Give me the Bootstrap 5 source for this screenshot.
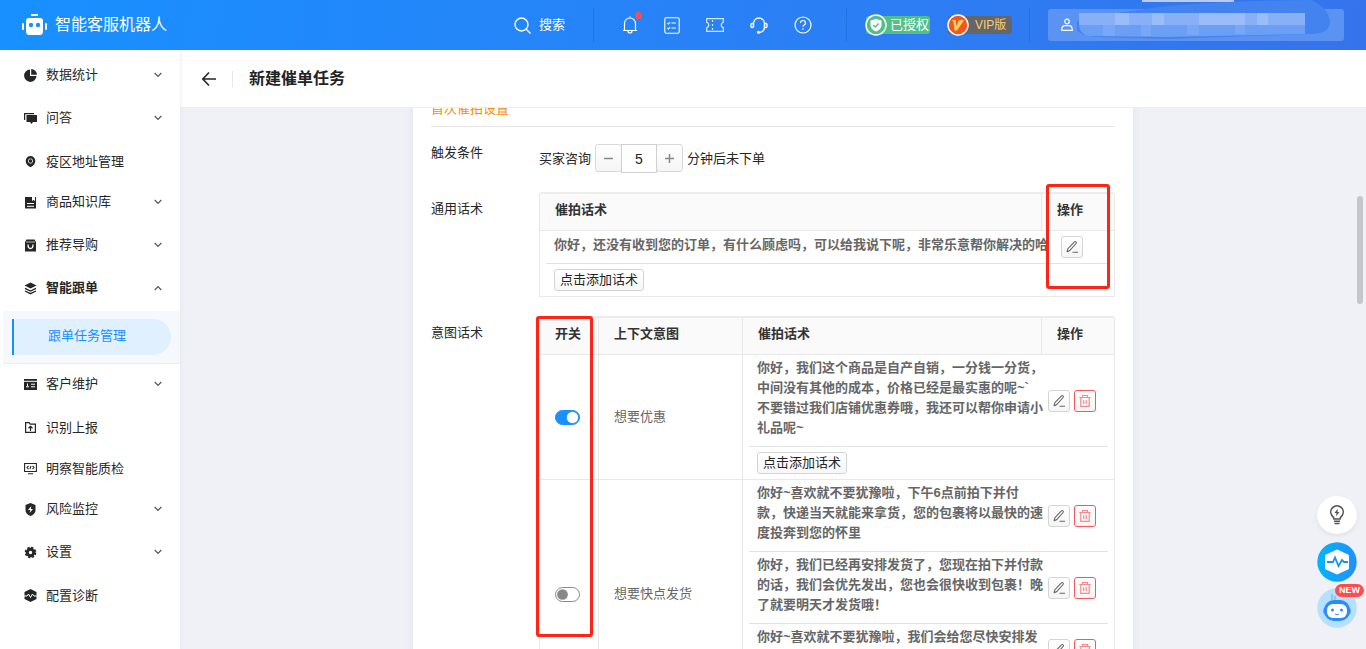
<!DOCTYPE html>
<html lang="zh-CN">
<head>
<meta charset="utf-8">
<meta name="viewport" content="width=device-width, initial-scale=1">
<title>新建催单任务</title>
<link href="https://cdn.jsdelivr.net/npm/bootstrap@5.3.0/dist/css/bootstrap.min.css" rel="stylesheet">
<style>
:root{--blue:#1890ff;--line:#e8e8e8;--ink:#262626}
body{font-family:"Liberation Sans","Noto Sans CJK SC",sans-serif;font-size:13px;line-height:20px;color:var(--ink);background:#eff1f6}
a{text-decoration:none;color:inherit}
svg{display:block;flex:none}
.topbar{height:50px;background:linear-gradient(100deg,#1890ff 0%,#2b7ff5 60%,#3573ec 100%);color:#fff;padding:0 22px}
.brand-name{font-size:16px;margin-left:8px}
.tool-btn{background:none;border:0;color:#fff;padding:0}
.top-rule{width:1px;height:34px;background:#1f72e4}
.tools{width:190px;margin:0 34px 0 28px}
.dot{width:7px;height:7px;background:#ff4d4f;border-radius:50%;top:-4px;right:-4px}
.tags{gap:18px;margin:0 17px 0 19px}
.tag{height:18px;border-radius:3px;font-size:13px;line-height:18px;padding:0 6px 0 24px}
.tag svg{left:-1px;top:-2px}
.tag-ok{background:#52bf88;width:64px}
.tag-vip{background:#666;color:#f5cf74;width:64px;font-size:12px;padding-left:27px}
.user-box{width:296px;height:32px;border-radius:3px;background:#5b93f3;border:0;color:#fff;padding:0 0 0 13px;margin-left:18px}
.sidebar{width:180px;flex:none;background:#fff;padding-top:5px;box-shadow:0 0 4px #e0e4ea;z-index:1}
.side-link{height:40px;margin-bottom:3px;padding:0 18px 0 24px;gap:9px;width:100%;background:none;border:0;color:var(--ink);text-align:left}
.side-link.plain{height:41px;margin-bottom:0}
.side-sub{height:53px;margin-left:3px;background:#f5f9fd;border-bottom:1px solid #e1f0ff;padding:8px 9px 0}
.side-sub a{display:block;height:36px;line-height:34px;background:#e1f0ff;border-left:2px solid var(--blue);border-radius:0 18px 18px 0;color:var(--blue);padding-left:34px}
.page-head{height:58px;background:#fff;padding-left:21px;flex:none;border-bottom:1px solid #eceef2}
.page-head h1{font-size:16px;font-weight:600;margin:0;color:#222}
.head-rule{width:1px;height:16px;background:#e8e8e8;margin:0 16px 0 15px}
.sheet{width:720px;background:#fff;padding:0 18px;box-shadow:0 0 8px #d9e2ef}
.sec-title{color:#ff8c00;font-size:13px;line-height:20px;margin:-9px 0 0;padding-bottom:7px;border-bottom:1px solid var(--line);font-weight:400}
.field-name{width:108px;flex:none;line-height:18px}
.field-main{width:576px}
.row-a{padding-top:17px}
.row-b{padding-top:19px}
.step-btn{width:27px;height:28px;border:1px solid #d9d9d9;background:linear-gradient(#fff,#f5f5f5);color:#888;padding:0;border-radius:3px}
.step-in{width:36px;height:29px;border:1px solid #d0d0d0;text-align:center;margin:0 -1px;padding:0;color:#222;font-size:14px;position:relative}
.talk-table{width:100%;table-layout:fixed;border-collapse:separate;border-spacing:0;border:1px solid var(--line);border-top:2px solid #ececec;border-radius:3px 3px 0 0;margin:0}
.talk-table th{height:37px;background:#fafafa;border-bottom:1px solid var(--line);padding:0 15px 4px 15px;font-weight:600;color:#333}
.talk-table th+th,.talk-table .cell+td{border-left:1px solid var(--line)}
.talk-table td{padding:0;color:#666}
.talk-table tr+tr td{border-top:1px solid var(--line)}
.talk-table .cell{padding:0 14px 0 15px;vertical-align:middle}
.talk-table .talks{padding:0 6px;vertical-align:top}
.talk{padding:0 12px 0 8px;border-bottom:1px solid #e2e2e2;font-weight:600}
.talk p{margin:0;padding:3px 0 8px;width:286px}
.talk.wide{padding-right:25px;height:33px}
.talk.wide p{width:auto;white-space:nowrap}
.add-line{padding:5px 8px}
.add-btn{height:22px;line-height:18px;border:1px solid #d4d4d4;border-radius:3px;background:linear-gradient(#fff,#f7f7f7);padding:0 5px;display:block;color:#222;width:90px;white-space:nowrap}
.ico-btn{width:22px;height:22px;border:1px solid #d4d4d4;border-radius:3px;background:linear-gradient(#fff,#f5f5f5);color:#666;padding:0;display:grid;place-items:center}
.ico-btn.del{border-color:#f5575a;color:#f78a8c}
.form-check-input.sw{width:25px;height:15px;margin:0;display:block;border-color:#888;box-shadow:none;
 background-image:url("data:image/svg+xml,%3csvg xmlns='http://www.w3.org/2000/svg' viewBox='-4 -4 8 8'%3e%3ccircle r='3.3' fill='%23888'/%3e%3c/svg%3e");border-radius:8px;background-position:left center}
.form-check-input.sw:checked{background-color:var(--blue);border-color:var(--blue);background-position:right center;
 background-image:url("data:image/svg+xml,%3csvg xmlns='http://www.w3.org/2000/svg' viewBox='-4 -4 8 8'%3e%3ccircle r='3.5' fill='%23fff'/%3e%3c/svg%3e")}
.callout{border:3px solid #ff2416;border-radius:3px;pointer-events:none}
.callout-op{width:64px;height:105px;top:-8px;right:5px}
.callout-sw{width:57px;height:321px;top:0;left:-3px}
.thumb{width:6px;height:108px;right:3px;top:146px;border-radius:3px;background:#c4c6ca}
.floaters{right:9px;bottom:23px;gap:8px}
.float-btn{width:40px;height:38px;border:0;padding:0;background:none}
.new-tag{top:-4px;right:-7px;background:#ff4d4f;color:#fff;font-size:9px;font-weight:700;line-height:13px;border-radius:7px;padding:0 4px}
</style>
</head>
<body>
<svg class="d-none" aria-hidden="true">
 <symbol id="down" viewBox="0 0 8 6"><path d="M.7 1l3.300 3.400L7.300 1" fill="none" stroke="#555" stroke-width="1.200"/></symbol>
 <symbol id="up" viewBox="0 0 8 6"><path d="M.7 5L4 1.600 7.300 5" fill="none" stroke="#555" stroke-width="1.200"/></symbol>
 <symbol id="pen" viewBox="0 0 14 14"><path d="M2 12l.9-3.300L9.400 1.900q.8-.7 1.600 0 .8.800.1 1.600L4.700 10.600 2 12M7.500 12.300h5.500" fill="none" stroke="currentColor" stroke-width="1.100"/></symbol>
 <symbol id="bin" viewBox="0 0 14 14"><path d="M1.300 3.500h11.400M4.500 3.300V1.500h5v1.800M2.800 3.700v8.600h8.400V3.700M5.700 6.300v3.800M8.300 6.300v3.800" fill="none" stroke="currentColor" stroke-width="1.200"/></symbol>
</svg>
<div class="vh-100 d-flex flex-column overflow-hidden">
<header class="topbar d-flex align-items-center flex-shrink-0">
 <a href="#" class="d-flex align-items-center">
  <svg width="25" height="22" viewBox="0 0 25 22" fill="#fff"><rect x="9" y="0" width="7" height="2" rx=".7"/><path d="M7 4h11q3 0 3 3v10q0 4-3 4H7q-3 0-3-4V7q0-3 3-3z"/><rect x="0" y="9" width="2" height="7" rx="1"/><rect x="23" y="9" width="2" height="7" rx="1"/><circle cx="9" cy="11" r="2.200" fill="#1890ff"/><circle cx="16" cy="11" r="2.200" fill="#1890ff"/></svg>
  <span class="brand-name">智能客服机器人</span>
 </a>
 <button class="tool-btn d-flex align-items-center gap-2 ms-auto me-4" type="button">
  <svg width="17" height="17" viewBox="0 0 17 17" fill="none" stroke="#fff" stroke-width="1.400"><circle cx="7.500" cy="7.500" r="6.500"/><path d="M12 12l4.500 4.500"/></svg>搜索</button>
 <span class="top-rule ms-1"></span>
 <div class="tools d-flex align-items-center justify-content-between">
  <button class="tool-btn position-relative" type="button" aria-label="通知"><svg width="16" height="18" viewBox="0 0 16 18" fill="none" stroke="#fff" stroke-width="1.200"><path d="M1 14.500h14M2.500 14.500V7.500a5.500 5.500 0 0 1 11 0v7M8 2V.5M6 15q0 2 2 2t2-2"/></svg><span class="dot position-absolute"></span></button>
  <button class="tool-btn" type="button" aria-label="任务"><svg width="16" height="17" viewBox="0 0 16 17" fill="none" stroke="#fff" stroke-width="1.100"><rect x=".8" y=".8" width="14.400" height="15.400" rx="1.500"/><path d="M7.500 6h4.500M7.500 11h4.500M3.500 6l1 1 1.700-2M3.500 11l1 1 1.700-2"/></svg></button>
  <button class="tool-btn" type="button" aria-label="卡券"><svg width="18" height="14" viewBox="0 0 18 14" fill="none" stroke="#fff" stroke-opacity=".8" stroke-width="1.200"><path d="M.7.7h16.600v3.800q-2 .2-2 2.500t2 2.500v3.800H.7V9.500q2-.2 2-2.500t-2-2.500zM6.500 2v2m0 2v2m0 2v2"/></svg></button>
  <button class="tool-btn" type="button" aria-label="客服"><svg width="18" height="17" viewBox="0 0 18 17" fill="none" stroke="#fff" stroke-width="1.300"><path d="M3.500 10V6.500a5.500 5.500 0 0 1 11 0V10q0 4.500-5 5.500"/><rect x="1" y="6.500" width="2.500" height="4" rx="1"/><rect x="14.500" y="6.500" width="2.500" height="4" rx="1"/><circle cx="8.500" cy="15.300" r=".9" fill="#fff"/></svg></button>
  <button class="tool-btn" type="button" aria-label="帮助"><svg width="18" height="18" viewBox="0 0 18 18" fill="none" stroke="#fff" stroke-width="1.200"><circle cx="9" cy="9" r="8"/><path d="M6.500 7q0-2.500 2.500-2.500T11.500 7q0 1.300-1.300 2T9 10.800M9 12.300v1.400"/></svg></button>
 </div>
 <span class="top-rule"></span>
 <div class="tags d-flex">
  <span class="tag tag-ok position-relative text-nowrap"><svg class="position-absolute" width="22" height="22" viewBox="0 0 22 22"><circle cx="11" cy="11" r="10" fill="#52bf88" stroke="#fff" stroke-width="1.500"/><path d="M11 5l5.500 1.500v5Q16 15.500 11 17.500 6 15.500 5.500 11.500v-5z" fill="#fff"/><path d="M8.300 11l2 2 3.400-3.500" fill="none" stroke="#52bf88" stroke-width="1.500"/></svg>已授权</span>
  <span class="tag tag-vip position-relative text-nowrap"><svg class="position-absolute" width="22" height="22" viewBox="0 0 22 22"><circle cx="11" cy="11" r="10" fill="#fa541c" stroke="#fff" stroke-width="1.500"/><path d="M5 6h3.500l.8 6L12 6h5l-7 10.500H7.500L6.500 8z" fill="#ffd666"/></svg>VIP版</span>
 </div>
 <span class="top-rule"></span>
 <button class="user-box d-flex align-items-center" type="button" aria-label="账户">
  <svg width="12" height="14" viewBox="0 0 12 14" fill="none" stroke="#fff" stroke-width="1.200"><circle cx="6" cy="3.500" r="2.300"/><path d="M.7 12.300Q.7 7.700 4 7.700h4q3.300 0 3.300 4.600z"/></svg>
  <svg width="260" height="50" viewBox="0 0 260 50" class="ms-1"><path d="M65 0h92v2H65z" fill="#b9cbef"/><path d="M0 22Q5 12 40 13L90 6Q160 0 235 0q18 10 18 22 0 12-20 12L90 39 20 37Q2 35 0 30z" fill="#4283f0"/><path d="M2 24h226v10L90 37 12 36Q2 34 2 24" fill="#6a9ff5"/><path d="M2 13h226v12H2z" fill="#87b0f7"/><path d="M38 13h14v12H38zM75 13h12v12H75zM122 13h46v12h-46zM180 13h11v12h-11z" fill="#9abcf8"/><path d="M26 25h12v11H26zM64 25h10v11H64zM110 25h12v10h-12zM158 25h10v9h-10z" fill="#77a7f6"/></svg>
 </button>
</header>
<div class="d-flex flex-grow-1 overflow-hidden">
 <nav class="sidebar" aria-label="主菜单">
  <button class="side-link d-flex align-items-center" type="button"><svg width="13" height="13" viewBox="0 0 13 13" fill="#262626"><path d="M6 .5V7h6.500A6.200 6.200 0 1 1 6 .5z"/><path d="M7.200 0A6 6 0 0 1 13 5.800H7.200z"/></svg>数据统计<svg class="ms-auto" width="8" height="6"><use href="#down"/></svg></button>
  <button class="side-link d-flex align-items-center" type="button"><svg width="13" height="13" viewBox="0 0 13 13" fill="#262626"><path d="M0 1h10v1.200H1.200V8H0zM2.500 3H13v7H9l-1.500 2L6 10H2.500z"/></svg>问答<svg class="ms-auto" width="8" height="6"><use href="#down"/></svg></button>
  <a href="#" class="side-link plain d-flex align-items-center"><svg width="13" height="13" viewBox="0 0 13 13"><path d="M6.500 1a4.800 4.800 0 0 1 4.800 4.800Q11.300 9.800 6.500 12.300 1.700 9.800 1.700 5.800A4.800 4.800 0 0 1 6.500 1z" fill="#262626"/><circle cx="6.500" cy="6" r="2.200" fill="none" stroke="#ddd" stroke-width=".9"/></svg>疫区地址管理</a>
  <button class="side-link d-flex align-items-center" type="button"><svg width="13" height="13" viewBox="0 0 13 13"><path d="M1 1h7v4l1.500-1L11 5V1h1v11.500H1z" fill="#262626"/><path d="M3 7.500h7M3 10.300h7" stroke="#fff"/></svg>商品知识库<svg class="ms-auto" width="8" height="6"><use href="#down"/></svg></button>
  <button class="side-link d-flex align-items-center" type="button"><svg width="13" height="13" viewBox="0 0 13 13"><path d="M2.500.5h8L12 3v9.500H1V3z" fill="#262626"/><path d="M2 3h9" stroke="#bbb"/><path d="M4 5.500q0 4 2.500 4T9 5.500" fill="none" stroke="#fff" stroke-width="1.300"/></svg>推荐导购<svg class="ms-auto" width="8" height="6"><use href="#down"/></svg></button>
  <button class="side-link d-flex align-items-center fw-semibold" type="button" aria-expanded="true"><svg width="13" height="13" viewBox="0 0 13 13" fill="#262626"><path d="M6.500.5l6 3-6 3-6-3z"/><path d="M1 6.300l5.500 2.700L12 6.300M1 9l5.500 2.700L12 9" fill="none" stroke="#262626" stroke-width="1.300"/></svg>智能跟单<svg class="ms-auto" width="8" height="6"><use href="#up"/></svg></button>
  <div class="side-sub"><a href="#" aria-current="page">跟单任务管理</a></div>
  <button class="side-link d-flex align-items-center" type="button"><svg width="13" height="13" viewBox="0 0 13 13"><path d="M0 1h13v11H0z" fill="#262626"/><path d="M0 3.300h13M7 6.200h4M7 8.800h4M2 8.800h3M3.500 5.500V8" stroke="#fff"/></svg>客户维护<svg class="ms-auto" width="8" height="6"><use href="#down"/></svg></button>
  <a href="#" class="side-link plain d-flex align-items-center"><svg width="13" height="13" viewBox="0 0 13 13" fill="none" stroke="#262626" stroke-width="1.200"><path d="M1.600 1.600h3.600l1 1.500h5.200v8.300H1.600zM6.500 10V5.500M4.500 7.300l2-1.900 2 1.900"/></svg>识别上报</a>
  <a href="#" class="side-link plain d-flex align-items-center"><svg width="13" height="13" viewBox="0 0 13 13" fill="none" stroke="#262626" stroke-width="1.100"><path d="M.6 1.500h11.800v8H.6zM4 11.700h5M4.500 3.800L3 5.500l1.500 1.700M8.500 3.800L10 5.500 8.500 7.200M7 3.800L6 7.200"/></svg>明察智能质检</a>
  <button class="side-link d-flex align-items-center" type="button"><svg width="13" height="13" viewBox="0 0 13 13"><path d="M6.500 0l5 2v5q0 4-5 6-5-2-5-6V2z" fill="#262626"/><path d="M7.300 3L4 7h2.300l-.8 3L9 6H6.800z" fill="#fff"/></svg>风险监控<svg class="ms-auto" width="8" height="6"><use href="#down"/></svg></button>
  <button class="side-link d-flex align-items-center" type="button"><svg width="13" height="13" viewBox="0 0 13 13"><circle cx="6.500" cy="6.500" r="3.200" fill="none" stroke="#262626" stroke-width="3"/><circle cx="6.500" cy="6.500" r="5" fill="none" stroke="#262626" stroke-width="1.600" stroke-dasharray="2.400 1.530"/></svg>设置<svg class="ms-auto" width="8" height="6"><use href="#down"/></svg></button>
  <a href="#" class="side-link plain d-flex align-items-center"><svg width="13" height="13" viewBox="0 0 13 13"><path d="M6.500 0l6 3v7l-6 3-6-3V3z" fill="#262626"/><path d="M0 7h3l1.500-2 2 3.500L8.500 5 10 7h3" fill="none" stroke="#fff"/></svg>配置诊断</a>
 </nav>
 <main class="flex-grow-1 d-flex flex-column overflow-hidden position-relative">
  <div class="page-head d-flex align-items-center">
   <button class="tool-btn" type="button" aria-label="返回"><svg width="16" height="16" viewBox="0 0 16 16" fill="none" stroke="#262626" stroke-width="1.600"><path d="M8 1.500L1.800 8 8 14.500M2 8h13"/></svg></button>
   <span class="head-rule"></span>
   <h1>新建催单任务</h1>
  </div>
  <div class="flex-grow-1 overflow-hidden">
   <form class="sheet mx-auto">
    <h2 class="sec-title">首次催拍设置</h2>
    <div class="row-a d-flex">
     <label class="field-name" for="mins">触发条件</label>
     <div class="field-main d-flex align-items-center">
      <span class="me-1">买家咨询</span>
      <div class="d-flex align-items-start">
       <button class="step-btn" type="button" aria-label="减少"><svg class="mx-auto" width="9" height="9"><path d="M0 4.500h9" stroke="#888" stroke-width="1.500"/></svg></button>
       <input class="step-in" id="mins" type="text" value="5">
       <button class="step-btn" type="button" aria-label="增加"><svg class="mx-auto" width="9" height="9"><path d="M0 4.500h9M4.500 0v9" stroke="#888" stroke-width="1.500"/></svg></button>
      </div>
      <span class="ms-1">分钟后未下单</span>
     </div>
    </div>
    <div class="row-b d-flex">
     <div class="field-name pt-2">通用话术</div>
     <div class="field-main position-relative">
      <table class="talk-table">
       <colgroup><col><col style="width:73px"></colgroup>
       <thead><tr><th>催拍话术</th><th>操作</th></tr></thead>
       <tbody><tr><td class="talks" colspan="2">
        <div class="talk wide d-flex align-items-center justify-content-between"><p>你好，还没有收到您的订单，有什么顾虑吗，可以给我说下呢，非常乐意帮你解决的哈</p><button class="ico-btn" type="button" aria-label="编辑"><svg width="14" height="14"><use href="#pen"/></svg></button></div>
        <div class="add-line"><button class="add-btn" type="button">点击添加话术</button></div>
       </td></tr></tbody>
      </table>
      <div class="callout callout-op position-absolute"></div>
     </div>
    </div>
    <div class="row-b d-flex">
     <div class="field-name pt-2">意图话术</div>
     <div class="field-main position-relative">
      <table class="talk-table">
       <colgroup><col style="width:58px"><col style="width:144px"><col><col style="width:73px"></colgroup>
       <thead><tr><th>开关</th><th>上下文意图</th><th>催拍话术</th><th>操作</th></tr></thead>
       <tbody>
       <tr>
        <td class="cell"><input class="form-check-input sw" type="checkbox" role="switch" aria-labelledby="intent1" checked></td>
        <td class="cell" id="intent1">想要优惠</td>
        <td class="talks" colspan="2">
         <div class="talk d-flex align-items-center"><p>你好，我们这个商品是自产自销，一分钱一分货，中间没有其他的成本，价格已经是最实惠的呢~`<br>不要错过我们店铺优惠券哦，我还可以帮你申请小礼品呢~</p><div class="d-flex gap-1 ms-auto"><button class="ico-btn" type="button" aria-label="编辑"><svg width="14" height="14"><use href="#pen"/></svg></button><button class="ico-btn del" type="button" aria-label="删除"><svg width="14" height="14"><use href="#bin"/></svg></button></div></div>
         <div class="add-line"><button class="add-btn" type="button">点击添加话术</button></div>
        </td>
       </tr>
       <tr>
        <td class="cell"><input class="form-check-input sw" type="checkbox" role="switch" aria-labelledby="intent2"></td>
        <td class="cell" id="intent2">想要快点发货</td>
        <td class="talks" colspan="2">
         <div class="talk d-flex align-items-center"><p>你好~喜欢就不要犹豫啦，下午6点前拍下并付款，快递当天就能来拿货，您的包裹将以最快的速度投奔到您的怀里</p><div class="d-flex gap-1 ms-auto"><button class="ico-btn" type="button" aria-label="编辑"><svg width="14" height="14"><use href="#pen"/></svg></button><button class="ico-btn del" type="button" aria-label="删除"><svg width="14" height="14"><use href="#bin"/></svg></button></div></div>
         <div class="talk d-flex align-items-center"><p>你好，我们已经再安排发货了，您现在拍下并付款的话，我们会优先发出，您也会很快收到包裹！晚了就要明天才发货哦！</p><div class="d-flex gap-1 ms-auto"><button class="ico-btn" type="button" aria-label="编辑"><svg width="14" height="14"><use href="#pen"/></svg></button><button class="ico-btn del" type="button" aria-label="删除"><svg width="14" height="14"><use href="#bin"/></svg></button></div></div>
         <div class="talk d-flex align-items-center"><p>你好~喜欢就不要犹豫啦，我们会给您尽快安排发<br>货的哦~</p><div class="d-flex gap-1 ms-auto"><button class="ico-btn" type="button" aria-label="编辑"><svg width="14" height="14"><use href="#pen"/></svg></button><button class="ico-btn del" type="button" aria-label="删除"><svg width="14" height="14"><use href="#bin"/></svg></button></div></div>
         <div class="add-line"><button class="add-btn" type="button">点击添加话术</button></div>
        </td>
       </tr>
       </tbody>
      </table>
      <div class="callout callout-sw position-absolute"></div>
     </div>
    </div>
   </form>
   <div class="thumb position-absolute"></div>
  </div>
  <div class="floaters position-absolute d-flex flex-column">
   <button class="float-btn bg-white rounded-circle shadow-sm" type="button" aria-label="提示"><svg class="mx-auto" width="16" height="20" viewBox="0 0 16 20" fill="none" stroke="#555" stroke-width="1.600"><path d="M5 14q0-1.500-2-3.300a6.200 6.200 0 1 1 10 0Q11 12.500 11 14zM5 16.300h6M5.500 18.500h5"/><path d="M8.700 3.800L5.500 8h2l-.5 3.200L10.500 7h-2z" fill="#555" stroke="none"/></svg></button>
   <button class="float-btn" type="button" aria-label="诊断"><svg width="40" height="40" viewBox="0 0 40 40"><defs><linearGradient id="g"><stop stop-color="#05b4fa"/><stop offset="1" stop-color="#2090ff"/></linearGradient></defs><circle cx="20" cy="20" r="19.700" fill="url(#g)"/><path d="M20 7.500l11 5q1 .5 1 1.500v12q0 1-1 1.500l-11 5-11-5q-1-.5-1-1.500V14q0-1 1-1.500z" fill="#fff"/><path d="M10 20h6l2-4.500 3.500 8.500L25 18l2 2h4" fill="none" stroke="#1890ff" stroke-width="1.800"/></svg></button>
   <button class="float-btn position-relative" type="button" aria-label="机器人助手"><svg width="40" height="40" viewBox="0 0 40 40"><circle cx="20" cy="20" r="19.700" fill="#b5e0ff"/><path d="M15 6v6m3-4v5" stroke="#78c0ff" stroke-width="1.500"/><rect x="6" y="19" width="28" height="8" rx="4" fill="#55a8fb"/><rect x="7" y="12" width="26" height="21" rx="10" fill="#2b8cf8"/><rect x="10" y="16" width="20" height="14" rx="6" fill="#fff"/><circle cx="15.500" cy="22" r="1.500" fill="#2b8cf8"/><circle cx="24.500" cy="22" r="1.500" fill="#2b8cf8"/><path d="M18 26q2 1.500 4 0" fill="none" stroke="#2b8cf8"/></svg><span class="new-tag position-absolute">NEW</span></button>
  </div>
 </main>
</div>
</div>
<script src="https://cdn.jsdelivr.net/npm/bootstrap@5.3.0/dist/js/bootstrap.bundle.min.js"></script>
</body>
</html>
